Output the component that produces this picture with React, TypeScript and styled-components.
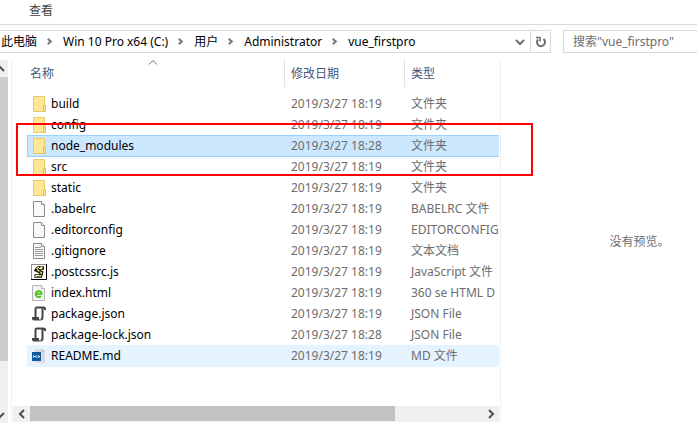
import React from "react";
import styled, { createGlobalStyle, css } from "styled-components";

const GlobalStyle = createGlobalStyle`
  *, *::before, *::after { box-sizing: border-box; }
  body {
    margin: 0;
    background: #fff;
    color: #000;
    font: 12px/16px "Noto Sans", "Noto Sans CJK SC", sans-serif;
  }
  button, input { font: inherit; color: inherit; }
`;

const Window = styled.div`
  display: flex;
  flex-direction: column;
  min-height: 100vh;
  overflow: hidden;
`;

const PlainButton = styled.button.attrs({ type: "button" })`
  display: flex;
  align-items: center;
  padding: 0;
  border: 0;
  background: none;
  white-space: nowrap;
`;

const Ribbon = styled.nav`
  display: flex;
  height: 25px;
  padding: 0 29px 3px;
  border-bottom: 1px solid #d9d9d9;
  color: #444;
`;

const AddressRow = styled.div`
  display: grid;
  grid-template-columns: minmax(0, 551fr) minmax(0, 134fr);
  gap: 12px;
  height: 35px;
  padding: 5px 0 7px;
`;

const AddressBar = styled.div`
  display: flex;
  border: 1px solid #d9d9d9;
  border-left: 0;
`;

const Crumbs = styled.ol`
  display: flex;
  flex: 1;
  align-items: center;
  min-width: 0;
  margin: 0;
  padding: 0 0 0 1px;
  list-style: none;
  overflow: hidden;
`;

const Crumb = styled.li`
  display: flex;
  align-items: center;
  & + &::before {
    content: "";
    width: 5px;
    height: 5px;
    margin: 0 12px 0 9px;
    border: solid #7a7a7a;
    border-width: 2px 2px 0 0;
    transform: rotate(45deg);
  }
`;

const BarButton = styled(PlainButton)<{ $divided?: boolean }>`
  justify-content: center;
  width: 20px;
  color: #6d6d6d;
  ${(p) => p.$divided && css`border-left: 1px solid #d9d9d9;`}
`;

const SearchBox = styled.input`
  width: 100%;
  padding: 0 9px;
  border: 1px solid #d9d9d9;
  border-right: 0;
  border-radius: 0;
  outline: 0;
  background: #fff;
  &::placeholder { color: #6d6d6d; opacity: 1; }
`;

const Body = styled.main`
  display: grid;
  grid-template-columns: 8px minmax(0, 491fr) minmax(0, 195fr);
  column-gap: 0;
  flex: 1;
`;

const NavScroll = styled.div`
  display: flex;
  flex-direction: column;
  background: #f0f0f0;
  overflow: hidden;
`;

const NavThumb = styled.div`
  flex: 283;
  background: #cdcdcd;
`;

const NavSpace = styled.div`
  flex: 45;
`;

const NavArrow = styled(PlainButton)`
  flex: none;
  align-self: flex-end;
  justify-content: center;
  width: 17px;
  height: 17px;
  color: #505050;
`;

const FilePane = styled.section`
  position: relative;
  display: flex;
  flex-direction: column;
  min-width: 0;
  margin-left: 3px;
  border: solid #f0f0f0;
  border-width: 0 1px;
`;

const TableClip = styled.div`
  flex: 1;
  margin-right: 1px;
  overflow: hidden;
`;

const FileTable = styled.table`
  width: 100%;
  table-layout: fixed;
  border-spacing: 0;
`;

const NameCol = styled.col`
  width: 273px;
`;

const DateCol = styled.col`
  width: 120px;
`;

const HeadCell = styled.th`
  position: relative;
  height: 27px;
  padding: 0 6px;
  border-right: 1px solid #e2e2e2;
  color: #43597a;
  font-weight: 400;
  text-align: left;
  &:first-child { padding-left: 18px; }
  &:last-child { border-right: 0; }
`;

const SortMark = styled.svg`
  position: absolute;
  top: 0;
  left: 50%;
`;

const FileRows = styled.tbody`
  &::before {
    content: "";
    display: block;
    height: 6px;
  }
`;

type Mark = "selected" | "hover" | undefined;

const rowFill = { selected: "#cce8ff", hover: "#e5f3ff" };
const rowEdge = { selected: "#99d1ff", hover: "#e5f3ff" };

const Cell = styled.td<{ $mark: Mark }>`
  height: 21px;
  padding: 0 0 0 6px;
  color: #6d6d6d;
  white-space: nowrap;
  ${(p) => p.$mark && css`
    background: ${rowFill[p.$mark]};
    box-shadow: inset 0 1px ${rowEdge[p.$mark]}, 0 1px ${rowEdge[p.$mark]};
  `}
`;

const NameCell = styled.td`
  height: 21px;
  padding: 0 0 0 15px;
`;

const NameLabel = styled.div<{ $mark: Mark }>`
  display: flex;
  align-items: center;
  gap: 4px;
  height: 21px;
  padding-left: 4px;
  white-space: nowrap;
  ${(p) => p.$mark && css`
    background: ${rowFill[p.$mark]};
    box-shadow: inset 1px 1px ${rowEdge[p.$mark]}, 0 1px ${rowEdge[p.$mark]};
  `}
`;

const ListScroll = styled.div`
  display: flex;
  flex: none;
  height: 16px;
  margin: 0 1px 1px;
  background: #f0f0f0;
`;

const ListArrow = styled(PlainButton)`
  flex: none;
  justify-content: center;
  width: 17px;
  color: #505050;
`;

const ListThumb = styled.div`
  flex: 366;
  height: 15px;
  background: #c2c2c2;
`;

const ListSpace = styled.div`
  flex: 87;
`;

const Highlight = styled.div`
  position: absolute;
  top: 63px;
  left: 4px;
  right: -33px;
  height: 53px;
  border: 2px solid #f00;
  pointer-events: none;
`;

const Preview = styled.aside`
  display: flex;
  align-items: center;
  justify-content: center;
  padding-left: 81px;
  color: #6d6d6d;
  white-space: nowrap;
`;

const arrows = {
  up: "M1 7 5 3 9 7",
  down: "M1 3 5 7 9 3",
  left: "M7 1 3 5 7 9",
  right: "M3 1 7 5 3 9",
};

function Arrow({ to }: { to: keyof typeof arrows }) {
  return (
    <svg width="10" height="10" viewBox="0 0 10 10" fill="none" stroke="currentColor" strokeWidth="2" aria-hidden="true">
      <path d={arrows[to]} />
    </svg>
  );
}

type Kind = "folder" | "blank" | "text" | "script" | "html" | "json" | "md";

function PageShape() {
  return (
    <>
      <path d="M2.5.5h8l3 3v12h-11z" fill="#f8f9fb" stroke="#8b8b8b" />
      <path d="M10.5.5v3h3" fill="#fff" stroke="#8b8b8b" />
    </>
  );
}

const drawings: Record<Kind, React.ReactNode> = {
  folder: (
    <>
      <path d="M2.5.5h11v15h-11z" fill="#ffe796" stroke="#ecca62" />
      <path d="M12.5 9.5h2v6h-2z" fill="#ffe796" stroke="#e6c04c" />
    </>
  ),
  blank: <PageShape />,
  text: (
    <>
      <PageShape />
      <path d="M4 4.5h6M4 6.5h8M4 8.5h8M4 10.5h8M4 12.5h8" stroke="#9a9a9a" />
    </>
  ),
  script: (
    <>
      <path d="M.5.5h15v15H.5z" fill="#fff" stroke="#8c8c8c" />
      <path d="M15.5 0v15.5H0" fill="none" stroke="#000" />
      <path d="M13 4H7L5.5 6l5 2.500L9.500 12H3.500" fill="none" stroke="#111" strokeWidth="3.600" />
      <path d="M12 3.500H7L5.500 5.500l5 3L9.500 12H4" fill="none" stroke="#d9d64a" strokeWidth="1.500" strokeDasharray="3 1" />
      <path d="M8 4.500h3M5 11.500h3" stroke="#fff" />
    </>
  ),
  html: (
    <>
      <path d="M1.500.5h9l3 3v12h-12z" fill="#f4f4f4" stroke="#b5b5b5" />
      <path d="M10.500.5v3h3" fill="#fff" stroke="#b5b5b5" />
      <path d="M4.500 8.800h6.200a3 3 0 1 0-.8 2.200" fill="none" stroke="#52c41a" strokeWidth="2" />
    </>
  ),
  json: (
    <>
      <path d="M14 4V2.500Q14 1.500 12.500 1.500H5.500Q4.500 1.500 4.500 3V11" fill="none" stroke="#444" strokeWidth="2" />
      <path d="M11.500 2V11.500Q11.500 13.500 9.500 13.500" fill="none" stroke="#444" strokeWidth="2" />
      <path d="M1 11h7v1.500q0 1.500 2 2H3q-2 0-2-2z" fill="#444" />
    </>
  ),
  md: (
    <>
      <path d="M4 1h7l3 3v11H4z" fill="#dcdfe3" />
      <path d="M11 1v3h3zM11 7h2M11 9h2M11 11h2" fill="#c3c8ce" stroke="#c3c8ce" />
      <path d="M1 4h9v9H1z" fill="#0f5a96" />
      <path d="M2.500 10V7.500L4 9l1-1.500V10M7 7.500v2.500M7 8h1.500v1H7" fill="none" stroke="#b9d8ee" />
    </>
  ),
};

function FileIcon({ kind }: { kind: Kind }) {
  return (
    <svg width="16" height="16" viewBox="0 0 16 16" aria-hidden="true">
      {drawings[kind]}
    </svg>
  );
}

interface FileEntry {
  name: string;
  kind: Kind;
  type: string;
  time?: string;
  mark?: Mark;
}

const files: FileEntry[] = [
  { name: "build", kind: "folder", type: "文件夹" },
  { name: "config", kind: "folder", type: "文件夹" },
  { name: "node_modules", kind: "folder", type: "文件夹", time: "18:28", mark: "selected" },
  { name: "src", kind: "folder", type: "文件夹" },
  { name: "static", kind: "folder", type: "文件夹" },
  { name: ".babelrc", kind: "blank", type: "BABELRC 文件" },
  { name: ".editorconfig", kind: "blank", type: "EDITORCONFIG" },
  { name: ".gitignore", kind: "text", type: "文本文档" },
  { name: ".postcssrc.js", kind: "script", type: "JavaScript 文件" },
  { name: "index.html", kind: "html", type: "360 se HTML D" },
  { name: "package.json", kind: "json", type: "JSON File" },
  { name: "package-lock.json", kind: "json", type: "JSON File", time: "18:28" },
  { name: "README.md", kind: "md", type: "MD 文件", mark: "hover" },
];

const path = ["此电脑", "Win 10 Pro x64 (C:)", "用户", "Administrator", "vue_firstpro"];

export default function App() {
  return (
    <Window lang="zh-CN">
      <GlobalStyle />
      <Ribbon>
        <PlainButton>查看</PlainButton>
      </Ribbon>
      <AddressRow>
        <AddressBar>
          <Crumbs>
            {path.map((part) => (
              <Crumb key={part}>
                <PlainButton>{part}</PlainButton>
              </Crumb>
            ))}
          </Crumbs>
          <BarButton aria-label="以前的位置">
            <Arrow to="down" />
          </BarButton>
          <BarButton $divided aria-label="刷新">
            <svg width="12" height="12" viewBox="0 0 12 12" fill="none" stroke="currentColor" strokeWidth="2" aria-hidden="true">
              <path d="M8.500 3A4 4 0 1 1 3 3.500" />
              <path d="M1 1.500h4v4" strokeWidth="1.500" />
            </svg>
          </BarButton>
        </AddressBar>
        <SearchBox type="search" aria-label="搜索" placeholder={'搜索"vue_firstpro"'} />
      </AddressRow>
      <Body>
        <NavScroll>
          <NavArrow aria-label="向上滚动">
            <Arrow to="up" />
          </NavArrow>
          <NavThumb />
          <NavSpace />
          <NavArrow aria-label="向下滚动">
            <Arrow to="down" />
          </NavArrow>
        </NavScroll>
        <FilePane>
          <TableClip>
            <FileTable>
              <colgroup>
                <NameCol />
                <DateCol />
                <col />
              </colgroup>
              <thead>
                <tr>
                  <HeadCell scope="col" aria-sort="ascending">
                    <PlainButton>名称</PlainButton>
                    <SortMark width="10" height="5" viewBox="0 0 10 5" fill="none" stroke="#6d6d6d" aria-hidden="true">
                      <path d="M1 4.500 5 .5 9 4.500" />
                    </SortMark>
                  </HeadCell>
                  <HeadCell scope="col">
                    <PlainButton>修改日期</PlainButton>
                  </HeadCell>
                  <HeadCell scope="col">
                    <PlainButton>类型</PlainButton>
                  </HeadCell>
                </tr>
              </thead>
              <FileRows>
                {files.map((f) => (
                  <tr key={f.name} aria-selected={f.mark === "selected"}>
                    <NameCell>
                      <NameLabel $mark={f.mark}>
                        <FileIcon kind={f.kind} />
                        {f.name}
                      </NameLabel>
                    </NameCell>
                    <Cell $mark={f.mark}>2019/3/27 {f.time ?? "18:19"}</Cell>
                    <Cell $mark={f.mark}>{f.type}</Cell>
                  </tr>
                ))}
              </FileRows>
            </FileTable>
          </TableClip>
          <ListScroll>
            <ListArrow aria-label="向左滚动">
              <Arrow to="left" />
            </ListArrow>
            <ListThumb />
            <ListSpace />
            <ListArrow aria-label="向右滚动">
              <Arrow to="right" />
            </ListArrow>
          </ListScroll>
          <Highlight />
        </FilePane>
        <Preview>没有预览。</Preview>
      </Body>
    </Window>
  );
}
